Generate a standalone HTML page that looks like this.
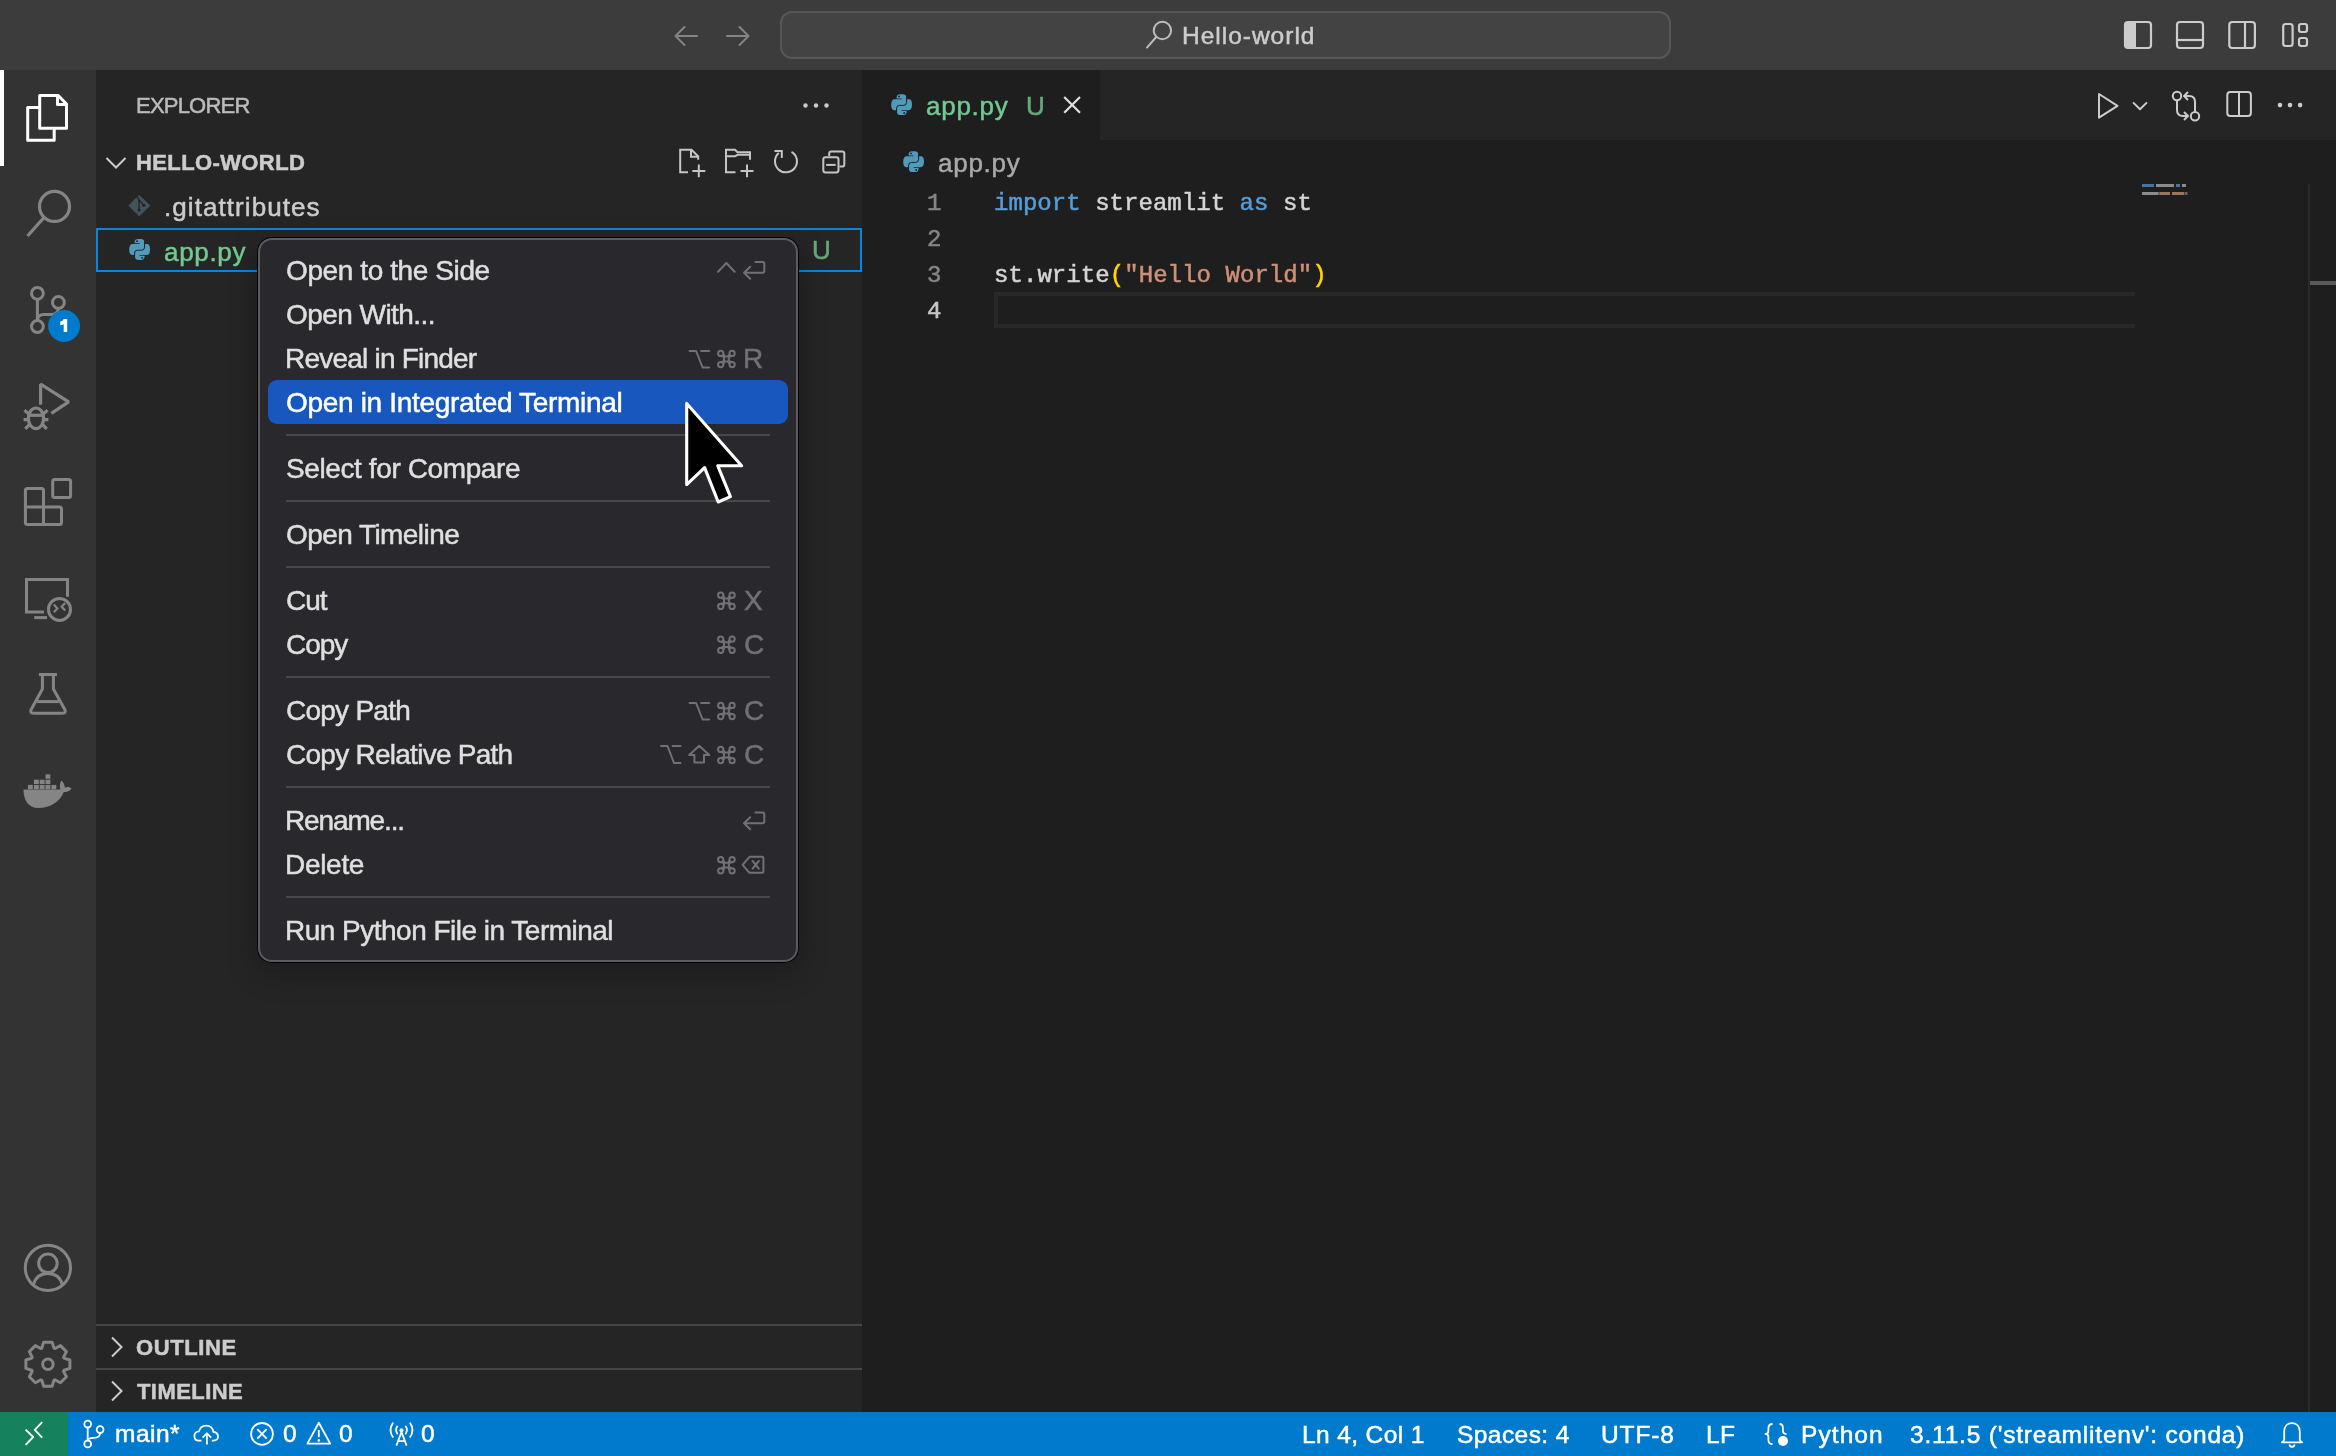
<!DOCTYPE html>
<html><head><meta charset="utf-8">
<style>
*{box-sizing:border-box;margin:0;padding:0}
html,body{width:2336px;height:1456px;overflow:hidden;background:#1e1e1e;font-family:"Liberation Sans",sans-serif;position:relative}
.a{position:absolute}
.t{position:absolute;white-space:pre;line-height:1;-webkit-text-stroke:0.5px currentColor;will-change:transform}
svg.ov{position:absolute;left:0;top:0;overflow:visible}
</style></head><body>
<div class=a style="left:0;top:0;width:2336px;height:70px;background:#3c3c3c"></div>
<div class=a style="left:780px;top:11px;width:891px;height:48px;background:#434343;border:2px solid #575757;border-radius:12px"></div>
<div class=a style="left:0;top:70px;width:96px;height:1342px;background:#333333"></div>
<div class=a style="left:0;top:70px;width:4px;height:96px;background:#ffffff"></div>
<div class=a style="left:96px;top:70px;width:766px;height:1342px;background:#252526"></div>
<div class=a style="left:96px;top:228px;width:766px;height:44px;border:2px solid #0587e0"></div>
<div class=a style="left:96px;top:1324px;width:766px;height:2px;background:#464647"></div>
<div class=a style="left:96px;top:1368px;width:766px;height:2px;background:#464647"></div>
<div class=a style="left:862px;top:70px;width:1474px;height:70px;background:#252526"></div>
<div class=a style="left:862px;top:70px;width:238px;height:70px;background:#1e1e1e"></div>
<div class=a style="left:994px;top:292px;width:1141px;height:36px;border:4px solid #282828;border-right:none"></div>
<div class=a style="left:2308px;top:184px;width:2px;height:1228px;background:#2b2b2b"></div>
<div class=a style="left:2310px;top:281px;width:26px;height:4px;background:#5a5a5a"></div>
<div class=a style="left:0;top:1412px;width:2336px;height:44px;background:#007acc"></div>
<div class=a style="left:0;top:1412px;width:68px;height:44px;background:#16825d"></div>

<div class=t style="left:135.6px;top:95.1px;font-family:'Liberation Sans';font-size:22px;font-weight:400;color:#bbbbbb;letter-spacing:-0.786px">EXPLORER</div>
<div class=t style="left:136.1px;top:152.2px;font-family:'Liberation Sans';font-size:22px;font-weight:700;color:#cccccc;letter-spacing:0.39px">HELLO-WORLD</div>
<div class=t style="left:163.5px;top:193.8px;font-family:'Liberation Sans';font-size:26px;font-weight:400;color:#cccccc;letter-spacing:1.069px">.gitattributes</div>
<div class=t style="left:164px;top:238.5px;font-family:'Liberation Sans';font-size:26px;font-weight:400;color:#73c991;letter-spacing:0.68px">app.py</div>
<div class=t style="left:812px;top:237.1px;font-family:'Liberation Sans';font-size:26px;font-weight:400;color:#66a87c;letter-spacing:0px">U</div>
<div class=t style="left:135.9px;top:1337.2px;font-family:'Liberation Sans';font-size:22px;font-weight:700;color:#cccccc;letter-spacing:0.6px">OUTLINE</div>
<div class=t style="left:136.9px;top:1381.2px;font-family:'Liberation Sans';font-size:22px;font-weight:700;color:#cccccc;letter-spacing:0.429px">TIMELINE</div>
<div class=t style="left:1181.5px;top:24.3px;font-family:'Liberation Sans';font-size:24.5px;font-weight:400;color:#cccccc;letter-spacing:0.99px">Hello-world</div>
<div class=t style="left:925.8px;top:92.9px;font-family:'Liberation Sans';font-size:26px;font-weight:400;color:#73c991;letter-spacing:0.74px">app.py</div>
<div class=t style="left:1025.7px;top:92.6px;font-family:'Liberation Sans';font-size:26px;font-weight:400;color:#66a87c;letter-spacing:0px">U</div>
<div class=t style="left:937.8px;top:150.1px;font-family:'Liberation Sans';font-size:26px;font-weight:400;color:#a9a9a9;letter-spacing:0.74px">app.py</div>
<div class=t style="left:114.8px;top:1422.4px;font-family:'Liberation Sans';font-size:24.5px;font-weight:400;color:#ffffff;letter-spacing:0.5px">main*</div>
<div class=t style="left:283px;top:1422.4px;font-family:'Liberation Sans';font-size:24.5px;font-weight:400;color:#ffffff;letter-spacing:0px">0</div>
<div class=t style="left:339.3px;top:1422.4px;font-family:'Liberation Sans';font-size:24.5px;font-weight:400;color:#ffffff;letter-spacing:0px">0</div>
<div class=t style="left:421.4px;top:1422.4px;font-family:'Liberation Sans';font-size:24.5px;font-weight:400;color:#ffffff;letter-spacing:0px">0</div>
<div class=t style="left:1302.4px;top:1422.8px;font-family:'Liberation Sans';font-size:24.5px;font-weight:400;color:#ffffff;letter-spacing:0.38px">Ln 4, Col 1</div>
<div class=t style="left:1457.4px;top:1422.8px;font-family:'Liberation Sans';font-size:24.5px;font-weight:400;color:#ffffff;letter-spacing:0.438px">Spaces: 4</div>
<div class=t style="left:1600.8px;top:1422.8px;font-family:'Liberation Sans';font-size:24.5px;font-weight:400;color:#ffffff;letter-spacing:0.875px">UTF-8</div>
<div class=t style="left:1706.4px;top:1423.1px;font-family:'Liberation Sans';font-size:24.5px;font-weight:400;color:#ffffff;letter-spacing:0px">L</div>
<div class=t style="left:1719.5px;top:1423.1px;font-family:'Liberation Sans';font-size:24.5px;font-weight:400;color:#ffffff;letter-spacing:0px">F</div>
<div class=t style="left:1801px;top:1422.8px;font-family:'Liberation Sans';font-size:24.5px;font-weight:400;color:#ffffff;letter-spacing:1.08px">Python</div>
<div class=t style="left:1910.4px;top:1422.5px;font-family:'Liberation Sans';font-size:24.5px;font-weight:400;color:#ffffff;letter-spacing:0.8px">3.11.5 ('streamlitenv': conda)</div>
<div class=t style="left:927px;top:191.9px;font-family:'Liberation Mono';font-size:24px;font-weight:400;color:#858585;letter-spacing:0px">1</div>
<div class=t style="left:926.8px;top:228px;font-family:'Liberation Mono';font-size:24px;font-weight:400;color:#858585;letter-spacing:0px">2</div>
<div class=t style="left:926.8px;top:264.2px;font-family:'Liberation Mono';font-size:24px;font-weight:400;color:#858585;letter-spacing:0px">3</div>
<div class=t style="left:927px;top:300px;font-family:'Liberation Mono';font-size:24px;font-weight:400;color:#c6c6c6;letter-spacing:0px">4</div>
<div class=t style="left:994.2px;top:191.9px;font-family:'Liberation Mono';font-size:24px;color:#d4d4d4;letter-spacing:0.043px"><span style='color:#569cd6'>import</span> streamlit <span style='color:#569cd6'>as</span> st</div>
<div class=t style="left:993.6px;top:264.2px;font-family:'Liberation Mono';font-size:24px;color:#d4d4d4;letter-spacing:0.064px">st.write<span style='color:#ffd700'>(</span><span style='color:#ce9178'>"Hello World"</span><span style='color:#ffd700'>)</span></div>

<svg class=ov width="2336" height="1456" fill="none" stroke-linecap="butt">
<g stroke="#ffffff" stroke-width="3" fill="none" stroke-linejoin="round"><path d="M39.7 107.5 H27.7 V140.2 H54.2 V128.2"/><path d="M39.7 95.4 H58 L66.5 104 V128.2 H39.7 Z"/><path d="M57.5 95.4 V104.6 H66.5"/></g>
<g stroke="#858585" stroke-width="3.2" fill="none"><circle cx="54.5" cy="206.4" r="15"/><path d="M43.8 217.8 L27.5 236" stroke-linecap="butt"/></g>
<g stroke="#858585" stroke-width="3" fill="none"><circle cx="37.4" cy="293.3" r="5.9"/><circle cx="58.4" cy="302.4" r="5.9"/><circle cx="37.4" cy="326.5" r="5.9"/><path d="M37.4 299.2 V320.6"/><path d="M37.4 320.5 C37.4 316.5 40 314.5 44 314.5 H51 C55.5 314.5 58.4 312 58.4 308.3"/></g>
<circle cx="64.1" cy="326" r="16" fill="#007acc"/><path d="M60.2 321.8 Q62.8 321.2 63.8 319 H67.2 V332 H63.7 V324.2 Q62.3 325 60.2 325.2 Z" fill="#fff"/>
<g stroke="#858585" stroke-width="3.2" fill="none" stroke-linejoin="bevel"><path d="M40.6 404.8 V384.2 L68.6 401.9 L51.4 413.4"/><ellipse cx="36" cy="418.3" rx="7.6" ry="10.3"/><path d="M28 415.3 H44"/><path d="M24.4 410.2 L28.7 413.8 M47.6 410.2 L43.3 413.8 M23.6 419.7 H28 M44 419.7 H48.4 M25.2 428.8 L29.4 424.6 M46.8 428.8 L42.6 424.6"/></g>
<g stroke="#858585" stroke-width="3" fill="none" stroke-linejoin="round"><rect x="52.7" y="479.4" width="17.9" height="18.1" rx="2"/><path d="M25.4 490.4 Q25.4 488.4 27.4 488.4 H41.5 Q43.5 488.4 43.5 490.4 V507 H59.5 Q61.5 507 61.5 509 V522.5 Q61.5 524.5 59.5 524.5 H27.4 Q25.4 524.5 25.4 522.5 Z"/><path d="M25.4 507 H43.5 V524.5"/></g>
<g stroke="#858585" stroke-width="3" fill="none"><path d="M44 612 H26.5 V579.5 H67.5 V596.7"/><path d="M34.2 617.6 H47"/><circle cx="59.5" cy="609.4" r="11"/><path d="M53.8 604.6 L57.4 608.4 L53.8 612.2 M65.2 603 L61.6 606.8 L65.2 610.6" stroke-width="2.2"/></g>
<g stroke="#858585" stroke-width="3" fill="none" stroke-linejoin="round"><path d="M38.9 674.5 H57"/><path d="M42.4 676 V689 L31.2 709.5 Q29.5 713.2 33.5 713.2 H62.5 Q66.5 713.2 64.8 709.5 L53.4 689 V676"/><path d="M37.2 701.6 H58.8"/></g>
<g fill="#858585"><path d="M23.5 789.5 H60.2 C59.6 786.5 59.8 783 61.3 780.5 C63.6 782.2 64.8 785 64.8 787.6 C67.2 786.6 70 787 71.5 788.6 C70.2 791 67.4 792.3 63.8 792 C60 801.5 50.5 808 38.5 808 C28.5 808 23.5 800.5 23.5 789.5 Z"/>
<rect x="27.9" y="784.9" width="4.9" height="4.3"/>
<rect x="33.9" y="784.9" width="4.9" height="4.3"/>
<rect x="39.7" y="784.9" width="4.9" height="4.3"/>
<rect x="45.5" y="784.9" width="4.9" height="4.3"/>
<rect x="51.4" y="784.9" width="4.9" height="4.3"/>
<rect x="33.9" y="779.7" width="4.9" height="4.3"/>
<rect x="39.7" y="779.7" width="4.9" height="4.3"/>
<rect x="45.5" y="779.7" width="4.9" height="4.3"/>
<rect x="45.5" y="774.4" width="4.9" height="4.3"/>
</g>
<g stroke="#858585" stroke-width="3" fill="none"><circle cx="47.9" cy="1267.9" r="22.6"/><circle cx="47.9" cy="1263.3" r="9.3"/><path d="M33.4 1284.8 C35.5 1277.5 41 1273.6 47.9 1273.6 C54.8 1273.6 60.3 1277.5 62.4 1284.8"/></g>
<g stroke="#858585" stroke-width="3" fill="none" stroke-linejoin="round"><path d="M41.84 1348.10 L43.67 1342.20 L52.13 1342.20 L53.96 1348.10 L55.00 1348.53 L60.46 1345.65 L66.45 1351.64 L63.57 1357.10 L64.00 1358.14 L69.90 1359.97 L69.90 1368.43 L64.00 1370.26 L63.57 1371.30 L66.45 1376.76 L60.46 1382.75 L55.00 1379.87 L53.96 1380.30 L52.13 1386.20 L43.67 1386.20 L41.84 1380.30 L40.80 1379.87 L35.34 1382.75 L29.35 1376.76 L32.23 1371.30 L31.80 1370.26 L25.90 1368.43 L25.90 1359.97 L31.80 1358.14 L32.23 1357.10 L29.35 1351.64 L35.34 1345.65 L40.80 1348.53 Z"/><circle cx="47.9" cy="1364.2" r="5.2"/></g>
<g stroke="#858585" stroke-width="2" fill="none" stroke-linecap="round" stroke-linejoin="round"><path d="M697 36 H675.5 M684.5 27 L675.5 36 L684.5 45"/><path d="M727 36 H748.5 M739.5 27 L748.5 36 L739.5 45"/></g>
<g stroke="#bdbdbd" stroke-width="2" fill="none"><circle cx="1162.4" cy="30.5" r="8.7"/><path d="M1156.2 37 L1147 47.6" stroke-linecap="round"/></g>
<g stroke="#cccccc" stroke-width="2.2" fill="none"><rect x="2125" y="22" width="26" height="26" rx="3"/><rect x="2177" y="22" width="26" height="26" rx="3"/><path d="M2177 40 H2203"/><rect x="2229.3" y="22" width="25.6" height="26" rx="3"/><path d="M2245 22 V48"/><rect x="2283.2" y="24" width="9.4" height="22" rx="2.5"/><rect x="2299" y="24" width="8" height="8" rx="2.2"/><rect x="2299" y="38" width="8" height="8" rx="2.2"/></g>
<path d="M2128 22 H2136 V48 H2128 Q2125 48 2125 45 V25 Q2125 22 2128 22 Z" fill="#cccccc"/>
<g fill="#cccccc"><circle cx="805.5" cy="105.5" r="2.2"/><circle cx="816" cy="105.5" r="2.2"/><circle cx="826.5" cy="105.5" r="2.2"/></g>
<g stroke="#cccccc" stroke-width="2" fill="none"><path d="M106.5 158 L116 167.5 L125.5 158"/><path d="M112 1337.5 L121.5 1347 L112 1356.5"/><path d="M112 1381.5 L121.5 1391 L112 1400.5"/></g>
<g stroke="#c5c5c5" stroke-width="2" fill="none"><path d="M688 172.2 H680.2 V149.8 H691.5 L698.2 156.5 V159.8"/><path d="M691 149.8 V156.8 H698.2"/><path d="M698.8 164.5 V177.2 M692.3 170.9 H705.3"/><path d="M735.5 172.2 H726 V149.8 H735 L737.5 152.3 H750 V159.8"/><path d="M726 156.3 H735 L737.5 154.8 H750"/><path d="M747 164.5 V177.2 M740.5 170.9 H753.5"/><path d="M778.8 153 A11 11 0 1 0 791.5 151.8"/><path d="M774.5 151 H781.8 V158"/><path d="M829.2 156 V153.5 Q829.2 151.4 831.3 151.4 H842.2 Q844.3 151.4 844.3 153.5 V164.4 Q844.3 166.5 842.2 166.5 H839.5"/><rect x="823.3" y="157.3" width="15.2" height="15.1" rx="2.1"/><path d="M826.1 164.9 H835.7"/></g>
<path d="M139.2 195.6 L149.4 205.6 L139.2 215.6 L129 205.6 Z" fill="#41535b" stroke="#41535b" stroke-width="1.2" stroke-linejoin="round"/>
<g stroke="#252526" stroke-width="1.4" fill="none"><path d="M136.8 196.3 L139.1 200 V209.5 M139.1 200 L143.5 205"/></g><g fill="#252526"><circle cx="139.1" cy="210" r="1.6"/><circle cx="143.8" cy="205.4" r="1.6"/><circle cx="139.1" cy="200.5" r="1.1"/></g>
<g transform="translate(129 238.8) scale(1.0)" fill="#519aba"><path d="M5.6 3.4 Q5.6 0.3 9.3 0.3 H11.8 Q15.2 0.3 15.2 3.4 V8.6 Q15.2 11 12.8 11 H8.4 Q5.7 11 5.7 13.8 V16.2 H3.2 Q0.2 16.2 0.2 10.8 Q0.2 5.2 3.6 5.2 H10.6 V4.4 H5.6 Z"/><path d="M5.6 3.4 Q5.6 0.3 9.3 0.3 H11.8 Q15.2 0.3 15.2 3.4 V8.6 Q15.2 11 12.8 11 H8.4 Q5.7 11 5.7 13.8 V16.2 H3.2 Q0.2 16.2 0.2 10.8 Q0.2 5.2 3.6 5.2 H10.6 V4.4 H5.6 Z" transform="rotate(180 10.6 10.7)"/><path d="M15.6 3.6 V8.4 Q15.6 11.4 12.6 11.4 H8.6 Q5.6 11.4 5.6 14.4 V17.6" stroke="#222" stroke-width="1" fill="none"/><circle cx="8" cy="2.4" r="0.9" fill="#1e1e1e"/><circle cx="13.2" cy="19" r="0.9" fill="#1e1e1e"/></g>
<g transform="translate(891 94) scale(1.0)" fill="#519aba"><path d="M5.6 3.4 Q5.6 0.3 9.3 0.3 H11.8 Q15.2 0.3 15.2 3.4 V8.6 Q15.2 11 12.8 11 H8.4 Q5.7 11 5.7 13.8 V16.2 H3.2 Q0.2 16.2 0.2 10.8 Q0.2 5.2 3.6 5.2 H10.6 V4.4 H5.6 Z"/><path d="M5.6 3.4 Q5.6 0.3 9.3 0.3 H11.8 Q15.2 0.3 15.2 3.4 V8.6 Q15.2 11 12.8 11 H8.4 Q5.7 11 5.7 13.8 V16.2 H3.2 Q0.2 16.2 0.2 10.8 Q0.2 5.2 3.6 5.2 H10.6 V4.4 H5.6 Z" transform="rotate(180 10.6 10.7)"/><path d="M15.6 3.6 V8.4 Q15.6 11.4 12.6 11.4 H8.6 Q5.6 11.4 5.6 14.4 V17.6" stroke="#222" stroke-width="1" fill="none"/><circle cx="8" cy="2.4" r="0.9" fill="#1e1e1e"/><circle cx="13.2" cy="19" r="0.9" fill="#1e1e1e"/></g>
<g transform="translate(903 151) scale(1.0)" fill="#519aba"><path d="M5.6 3.4 Q5.6 0.3 9.3 0.3 H11.8 Q15.2 0.3 15.2 3.4 V8.6 Q15.2 11 12.8 11 H8.4 Q5.7 11 5.7 13.8 V16.2 H3.2 Q0.2 16.2 0.2 10.8 Q0.2 5.2 3.6 5.2 H10.6 V4.4 H5.6 Z"/><path d="M5.6 3.4 Q5.6 0.3 9.3 0.3 H11.8 Q15.2 0.3 15.2 3.4 V8.6 Q15.2 11 12.8 11 H8.4 Q5.7 11 5.7 13.8 V16.2 H3.2 Q0.2 16.2 0.2 10.8 Q0.2 5.2 3.6 5.2 H10.6 V4.4 H5.6 Z" transform="rotate(180 10.6 10.7)"/><path d="M15.6 3.6 V8.4 Q15.6 11.4 12.6 11.4 H8.6 Q5.6 11.4 5.6 14.4 V17.6" stroke="#222" stroke-width="1" fill="none"/><circle cx="8" cy="2.4" r="0.9" fill="#1e1e1e"/><circle cx="13.2" cy="19" r="0.9" fill="#1e1e1e"/></g>
<g stroke="#e0e0e0" stroke-width="2.2" fill="none"><path d="M1064.2 97 L1080 112.8 M1080 97 L1064.2 112.8"/></g>
<g stroke="#cccccc" stroke-width="2" fill="none" stroke-linejoin="round"><path d="M2099 94 V117.7 L2117.5 105.8 Z"/><path d="M2133 102.4 L2140 109.2 L2147 102.4"/><circle cx="2177" cy="96" r="4.2"/><circle cx="2195" cy="116.2" r="4.2"/><path d="M2177 100.2 V110 Q2177 116 2183 116 H2188 M2184 112 L2188 116 L2184 120"/><path d="M2195 112 V102 Q2195 96 2189 96 H2184 M2188 92 L2184 96 L2188 100"/><rect x="2227.3" y="92" width="23.6" height="24" rx="3"/><path d="M2239 92 V116"/></g>
<g fill="#cccccc"><circle cx="2280" cy="105.1" r="2.3"/><circle cx="2290" cy="105.1" r="2.3"/><circle cx="2300.1" cy="105.1" r="2.3"/></g>
<g opacity="0.8"><g fill="#4f8cc4"><rect x="2142" y="184" width="12" height="3"/><rect x="2176" y="184" width="4" height="3"/></g><g fill="#a8a8a8"><rect x="2156" y="184" width="18" height="3"/><rect x="2182" y="184" width="4" height="3"/><rect x="2142" y="192" width="16" height="3"/><rect x="2158" y="192" width="2" height="3" fill="#777"/><rect x="2184.5" y="192" width="3" height="3" fill="#777"/></g><g fill="#c08a6c"><rect x="2160" y="192" width="10" height="3"/><rect x="2172" y="192" width="12" height="3"/></g></g>
<g stroke="#ffffff" stroke-width="1.8" fill="none" stroke-linejoin="round"><path d="M25.6 1429.6 L33.2 1437 L25.6 1444.8 M42.2 1422.1 L34.8 1429.8 L42.2 1437.7"/><circle cx="87.7" cy="1424.1" r="3.4"/><circle cx="87.7" cy="1443.9" r="3.4"/><circle cx="100.1" cy="1429.6" r="3.4"/><path d="M87.7 1427.5 V1440.5 M100.1 1433 C100.1 1436.5 97.5 1437.8 94 1437.8 C90 1437.8 87.7 1438.8 87.7 1440.5"/><path d="M201.5 1440.6 H198.5 C195.5 1440.6 194.4 1438.3 194.4 1436 C194.4 1433.3 196.5 1431.4 199 1431.4 C199.8 1427.8 202.7 1425.6 206.2 1425.6 C210.3 1425.6 213 1428.4 213.4 1432 C216.3 1432.3 218 1434.3 218 1436.5 C218 1438.7 216.3 1440.6 213.7 1440.6 H211.8"/><path d="M206.9 1444.6 V1433.5 M202.6 1437.6 L206.9 1433.3 L211.2 1437.6"/><circle cx="262" cy="1433.9" r="10.9"/><path d="M257.3 1429.2 L266.7 1438.6 M266.7 1429.2 L257.3 1438.6"/><path d="M318.8 1422.8 L330.2 1443.6 H307.4 Z"/><path d="M318.8 1430 V1437.2"/><path d="M401.5 1432 L396.4 1445.6 M401.5 1432 L406.6 1445.6 M398 1441.2 H405"/><path d="M397.6 1425.8 Q394.6 1430 397.6 1434.2 M405.4 1425.8 Q408.4 1430 405.4 1434.2"/><path d="M393.2 1422.6 Q387.8 1430 393.2 1437.6 M409.8 1422.6 Q415.2 1430 409.8 1437.6"/><path d="M1772.6 1424 Q1768.4 1424 1768.4 1428.5 V1430.8 Q1768.4 1433.9 1765.5 1433.9 Q1768.4 1433.9 1768.4 1437 V1439.7 Q1768.4 1444.2 1772.6 1444.2"/><path d="M1779.6 1424 Q1782.9 1424 1782.9 1428 V1430.8 Q1782.9 1434 1786.5 1434"/><path d="M2284.2 1440.2 V1431.8 C2284.2 1426.2 2287.6 1423.2 2292 1423.2 C2296.4 1423.2 2299.8 1426.2 2299.8 1431.8 V1440.2 L2302 1442.4 H2282 Z"/><path d="M2289.6 1444.4 A2.4 2.4 0 0 0 2294.4 1444.4"/></g>
<g fill="#ffffff"><circle cx="318.8" cy="1440.4" r="1.3"/><circle cx="401.5" cy="1430.2" r="2"/><circle cx="1783" cy="1441" r="5"/></g>
</svg>
<div class=a style="left:257px;top:237px;width:542px;height:726px;background:#000;border-radius:15px;box-shadow:0 10px 30px rgba(0,0,0,.25)"></div>
<div class=a style="left:258px;top:238px;width:540px;height:724px;background:#29292d;border:2px solid #5c5c60;border-radius:14px"></div>
<div class=a style="left:268px;top:380px;width:520px;height:44px;background:#1857be;border-radius:9px"></div>
<div class=a style="left:286px;top:434px;width:484px;height:2px;background:#48484b"></div>
<div class=a style="left:286px;top:500px;width:484px;height:2px;background:#48484b"></div>
<div class=a style="left:286px;top:566px;width:484px;height:2px;background:#48484b"></div>
<div class=a style="left:286px;top:676px;width:484px;height:2px;background:#48484b"></div>
<div class=a style="left:286px;top:786px;width:484px;height:2px;background:#48484b"></div>
<div class=a style="left:286px;top:896px;width:484px;height:2px;background:#48484b"></div>
<svg class=ov width="2336" height="1456" fill="none" stroke="#717174" stroke-width="2.0" stroke-linecap="round" stroke-linejoin="round">
<path d="M718 271.8 L726.4 263 L734.6 271.8"/>
<path d="M755.4 262 H762.6 Q764.3 262 764.3 263.7 V271.1 Q764.3 272.8 762.6 272.8 H744 M750.2 266.8 L744 272.8 L750.2 278.8"/>
<path d="M689.6 351 H696.1 L702.6 367.5 H709.1 M701.1 351 H709.1"/>
<path d="M723.9999999999999 356.59999999999997 H728.8 V361.40000000000003 H723.9999999999999 Z M723.9999999999999 356.59999999999997 V354.98999999999995 M728.8 356.59999999999997 V354.98999999999995 M723.9999999999999 361.40000000000003 V363.01000000000005 M728.8 361.40000000000003 V363.01000000000005 M723.9999999999999 356.59999999999997 H722.29 M723.9999999999999 361.40000000000003 H722.29 M728.8 356.59999999999997 H730.5099999999999 M728.8 361.40000000000003 H730.5099999999999"/><circle cx="720.6999999999999" cy="353.4" r="2.65"/><circle cx="732.0999999999999" cy="353.4" r="2.65"/><circle cx="720.6999999999999" cy="364.6" r="2.65"/><circle cx="732.0999999999999" cy="364.6" r="2.65"/>
<path d="M723.9999999999999 598.4 H728.8 V603.1999999999999 H723.9999999999999 Z M723.9999999999999 598.4 V596.79 M728.8 598.4 V596.79 M723.9999999999999 603.1999999999999 V604.81 M728.8 603.1999999999999 V604.81 M723.9999999999999 598.4 H722.29 M723.9999999999999 603.1999999999999 H722.29 M728.8 598.4 H730.5099999999999 M728.8 603.1999999999999 H730.5099999999999"/><circle cx="720.6999999999999" cy="595.1999999999999" r="2.65"/><circle cx="732.0999999999999" cy="595.1999999999999" r="2.65"/><circle cx="720.6999999999999" cy="606.4" r="2.65"/><circle cx="732.0999999999999" cy="606.4" r="2.65"/>
<path d="M723.9999999999999 642.3000000000001 H728.8 V647.1 H723.9999999999999 Z M723.9999999999999 642.3000000000001 V640.69 M728.8 642.3000000000001 V640.69 M723.9999999999999 647.1 V648.71 M728.8 647.1 V648.71 M723.9999999999999 642.3000000000001 H722.29 M723.9999999999999 647.1 H722.29 M728.8 642.3000000000001 H730.5099999999999 M728.8 647.1 H730.5099999999999"/><circle cx="720.6999999999999" cy="639.1" r="2.65"/><circle cx="732.0999999999999" cy="639.1" r="2.65"/><circle cx="720.6999999999999" cy="650.3000000000001" r="2.65"/><circle cx="732.0999999999999" cy="650.3000000000001" r="2.65"/>
<path d="M689.6 703 H696.1 L702.6 719.5 H709.1 M701.1 703 H709.1"/>
<path d="M723.9999999999999 708.6 H728.8 V713.4 H723.9999999999999 Z M723.9999999999999 708.6 V706.99 M728.8 708.6 V706.99 M723.9999999999999 713.4 V715.01 M728.8 713.4 V715.01 M723.9999999999999 708.6 H722.29 M723.9999999999999 713.4 H722.29 M728.8 708.6 H730.5099999999999 M728.8 713.4 H730.5099999999999"/><circle cx="720.6999999999999" cy="705.4" r="2.65"/><circle cx="732.0999999999999" cy="705.4" r="2.65"/><circle cx="720.6999999999999" cy="716.6" r="2.65"/><circle cx="732.0999999999999" cy="716.6" r="2.65"/>
<path d="M661 746 H667.5 L674 763 H680.5 M672.5 746 H680.5"/>
<path d="M699.2 745.8 L689.2 755 H694.4 V762.6 H704 V755 H709.2 Z"/>
<path d="M723.9999999999999 752.6 H728.8 V757.4 H723.9999999999999 Z M723.9999999999999 752.6 V750.99 M728.8 752.6 V750.99 M723.9999999999999 757.4 V759.01 M728.8 757.4 V759.01 M723.9999999999999 752.6 H722.29 M723.9999999999999 757.4 H722.29 M728.8 752.6 H730.5099999999999 M728.8 757.4 H730.5099999999999"/><circle cx="720.6999999999999" cy="749.4" r="2.65"/><circle cx="732.0999999999999" cy="749.4" r="2.65"/><circle cx="720.6999999999999" cy="760.6" r="2.65"/><circle cx="732.0999999999999" cy="760.6" r="2.65"/>
<path d="M755.4 812.5 H762.6 Q764.3 812.5 764.3 814.2 V821.6 Q764.3 823.3 762.6 823.3 H744 M750.2 817.3 L744 823.3 L750.2 829.3"/>
<path d="M723.9999999999999 862.8000000000001 H728.8 V867.6 H723.9999999999999 Z M723.9999999999999 862.8000000000001 V861.19 M728.8 862.8000000000001 V861.19 M723.9999999999999 867.6 V869.21 M728.8 867.6 V869.21 M723.9999999999999 862.8000000000001 H722.29 M723.9999999999999 867.6 H722.29 M728.8 862.8000000000001 H730.5099999999999 M728.8 867.6 H730.5099999999999"/><circle cx="720.6999999999999" cy="859.6" r="2.65"/><circle cx="732.0999999999999" cy="859.6" r="2.65"/><circle cx="720.6999999999999" cy="870.8000000000001" r="2.65"/><circle cx="732.0999999999999" cy="870.8000000000001" r="2.65"/>
<path d="M749.5 856.8 H762 Q763.4 856.8 763.4 858.2 V871.4 Q763.4 872.8 762 872.8 H749.5 L742.6 864.8 Z M752.6 861 L758.8 868.6 M758.8 861 L752.6 868.6"/>
</svg>
<div class=t style="left:285.6px;top:257.1px;font-family:'Liberation Sans';font-size:28px;font-weight:400;color:#dfdfdf;letter-spacing:-0.4px">Open to the Side</div>
<div class=t style="left:286px;top:301.4px;font-family:'Liberation Sans';font-size:28px;font-weight:400;color:#dfdfdf;letter-spacing:-0.545px">Open With...</div>
<div class=t style="left:284.7px;top:344.8px;font-family:'Liberation Sans';font-size:28px;font-weight:400;color:#dfdfdf;letter-spacing:-0.78px">Reveal in Finder</div>
<div class=t style="left:286px;top:389.4px;font-family:'Liberation Sans';font-size:28px;font-weight:400;color:#ffffff;letter-spacing:-0.323px">Open in Integrated Terminal</div>
<div class=t style="left:286px;top:455px;font-family:'Liberation Sans';font-size:28px;font-weight:400;color:#dfdfdf;letter-spacing:-0.394px">Select for Compare</div>
<div class=t style="left:286px;top:520.7px;font-family:'Liberation Sans';font-size:28px;font-weight:400;color:#dfdfdf;letter-spacing:-0.567px">Open Timeline</div>
<div class=t style="left:286px;top:586.6px;font-family:'Liberation Sans';font-size:28px;font-weight:400;color:#dfdfdf;letter-spacing:-1.05px">Cut</div>
<div class=t style="left:286px;top:630.5px;font-family:'Liberation Sans';font-size:28px;font-weight:400;color:#dfdfdf;letter-spacing:-1.033px">Copy</div>
<div class=t style="left:286px;top:696.8px;font-family:'Liberation Sans';font-size:28px;font-weight:400;color:#dfdfdf;letter-spacing:-0.75px">Copy Path</div>
<div class=t style="left:286px;top:740.7px;font-family:'Liberation Sans';font-size:28px;font-weight:400;color:#dfdfdf;letter-spacing:-0.735px">Copy Relative Path</div>
<div class=t style="left:285px;top:807px;font-family:'Liberation Sans';font-size:28px;font-weight:400;color:#dfdfdf;letter-spacing:-1.138px">Rename...</div>
<div class=t style="left:285px;top:851px;font-family:'Liberation Sans';font-size:28px;font-weight:400;color:#dfdfdf;letter-spacing:-0.3px">Delete</div>
<div class=t style="left:285px;top:917.3px;font-family:'Liberation Sans';font-size:28px;font-weight:400;color:#dfdfdf;letter-spacing:-0.512px">Run Python File in Terminal</div>
<div class=t style="left:742.8px;top:344.8px;font-family:'Liberation Sans';font-size:28px;font-weight:400;color:#717174;letter-spacing:0px">R</div>
<div class=t style="left:743.8px;top:586.6px;font-family:'Liberation Sans';font-size:28px;font-weight:400;color:#717174;letter-spacing:0px">X</div>
<div class=t style="left:743.8px;top:630.5px;font-family:'Liberation Sans';font-size:28px;font-weight:400;color:#717174;letter-spacing:0px">C</div>
<div class=t style="left:743.8px;top:696.8px;font-family:'Liberation Sans';font-size:28px;font-weight:400;color:#717174;letter-spacing:0px">C</div>
<div class=t style="left:743.8px;top:740.7px;font-family:'Liberation Sans';font-size:28px;font-weight:400;color:#717174;letter-spacing:0px">C</div>
<svg class=ov width="2336" height="1456">
<path d="M686.7 403.4 V484.6 L704.6 467.6 L718.2 502 L730.4 496.6 L717.8 465.8 H741.6 Z" fill="#000" stroke="#fff" stroke-width="3.1" stroke-linejoin="round"/>
</svg>

</body></html>
